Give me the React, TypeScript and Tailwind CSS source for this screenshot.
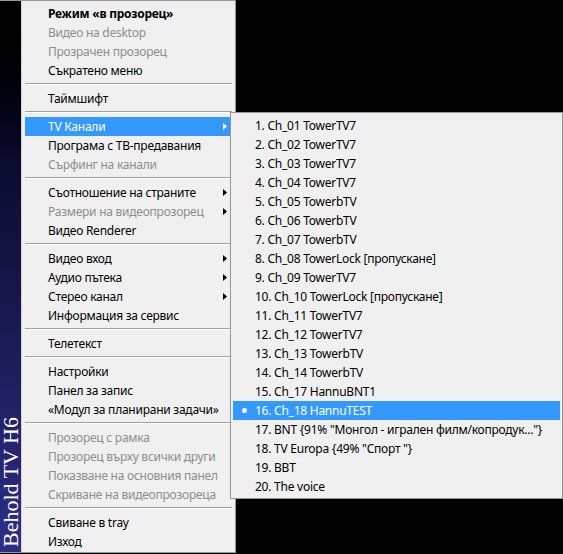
type Item = { label: string; bold?: boolean; disabled?: boolean; sub?: boolean; active?: boolean } | 'sep'

const mainItems: Item[] = [
  { label: 'Режим «в прозорец»', bold: true },
  { label: 'Видео на desktop', disabled: true },
  { label: 'Прозрачен прозорец', disabled: true },
  { label: 'Съкратено меню' },
  'sep',
  { label: 'Таймшифт' },
  'sep',
  { label: 'TV Канали', sub: true, active: true },
  { label: 'Програма с ТВ-предавания' },
  { label: 'Сърфинг на канали', disabled: true },
  'sep',
  { label: 'Съотношение на страните', sub: true },
  { label: 'Размери на видеопрозорец', sub: true, disabled: true },
  { label: 'Видео Renderer' },
  'sep',
  { label: 'Видео вход', sub: true },
  { label: 'Аудио пътека', sub: true },
  { label: 'Стерео канал', sub: true },
  { label: 'Информация за сервис' },
  'sep',
  { label: 'Телетекст' },
  'sep',
  { label: 'Настройки' },
  { label: 'Панел за запис' },
  { label: '«Модул за планирани задачи»' },
  'sep',
  { label: 'Прозорец с рамка', disabled: true },
  { label: 'Прозорец върху всички други', disabled: true },
  { label: 'Показване на основния панел', disabled: true },
  { label: 'Скриване на видеопрозореца', disabled: true },
  'sep',
  { label: 'Свиване в tray' },
  { label: 'Изход' },
]

const channels = [
  '1. Ch_01 TowerTV7',
  '2. Ch_02 TowerTV7',
  '3. Ch_03 TowerTV7',
  '4. Ch_04 TowerTV7',
  '5. Ch_05 TowerbTV',
  '6. Ch_06 TowerbTV',
  '7. Ch_07 TowerbTV',
  '8. Ch_08 TowerLock [пропускане]',
  '9. Ch_09 TowerTV7',
  '10. Ch_10 TowerLock [пропускане]',
  '11. Ch_11 TowerTV7',
  '12. Ch_12 TowerTV7',
  '13. Ch_13 TowerbTV',
  '14. Ch_14 TowerbTV',
  '15. Ch_17 HannuBNT1',
  '16. Ch_18 HannuTEST',
  '17. BNT {91% "Монгол - игрален филм/копродук..."}',
  '18. TV Europa {49% "Спорт "}',
  '19. BBT',
  '20. The voice',
]

const Arrow = ({ white }: { white?: boolean }) => (
  <svg width="4" height="7" viewBox="0 0 4 7" className="shrink-0">
    <path d="M0 0 L4 3.5 L0 7 Z" fill={white ? '#ffffff' : '#000000'} />
  </svg>
)

const App = () => {
  return (
    <div className="relative w-[563px] h-[554px] bg-black overflow-hidden font-['Noto_Sans',sans-serif] text-[12px] tracking-[-0.25px]">
      {/* main popup menu */}
      <div className="flex w-[236px] bg-[#f0f0f0] border-t border-r border-b border-[#979797]">
        <div className="w-[22px] shrink-0 flex flex-col justify-end items-center pb-[5px] border-r border-[#d4d4d4] bg-gradient-to-b from-black via-[#0c0c30] via-30% to-[#2e2e88]">
          <span className="[writing-mode:vertical-rl] rotate-180 text-white text-[22px] leading-[21px] tracking-normal whitespace-nowrap font-['Liberation_Serif',serif]">
            Behold TV H6
          </span>
        </div>
        <div className="flex-1 pl-[3px] pr-[3px] pt-[3px] pb-[1px]">
          {mainItems.map((it, i) =>
            it === 'sep' ? (
              <div key={i} className="h-[9px] pt-[3px]">
                <div className="h-px bg-[#a0a0a0]" />
                <div className="h-px bg-white" />
              </div>
            ) : (
              <div
                key={i}
                className={`h-[19px] flex items-center justify-between pl-[23px] pr-[5px] whitespace-nowrap ${
                  it.active ? 'bg-[#3399ff] text-white' : it.disabled ? 'text-[#8d8d8d]' : 'text-black'
                } ${it.bold ? 'font-bold' : ''}`}
              >
                <span>{it.label}</span>
                {it.sub && <Arrow white={it.active} />}
              </div>
            )
          )}
        </div>
      </div>

      {/* TV channels submenu */}
      <div className="absolute left-[230px] top-[112px] w-[333px] bg-[#f0f0f0] border border-[#979797] px-[2px] pt-[3px] pb-[2px]">
        {channels.map((c, i) => {
          const active = i === 15
          return (
            <div
              key={c}
              className={`h-[19px] flex items-center whitespace-nowrap ${
                active ? 'bg-[#3399ff] text-white' : 'text-black'
              }`}
            >
              <div className="w-[22px] flex justify-center pl-[1px]">
                {active && <div className="w-[5px] h-[5px] rounded-full bg-white" />}
              </div>
              <span>{c}</span>
            </div>
          )
        })}
      </div>
    </div>
  )
}

export default App
